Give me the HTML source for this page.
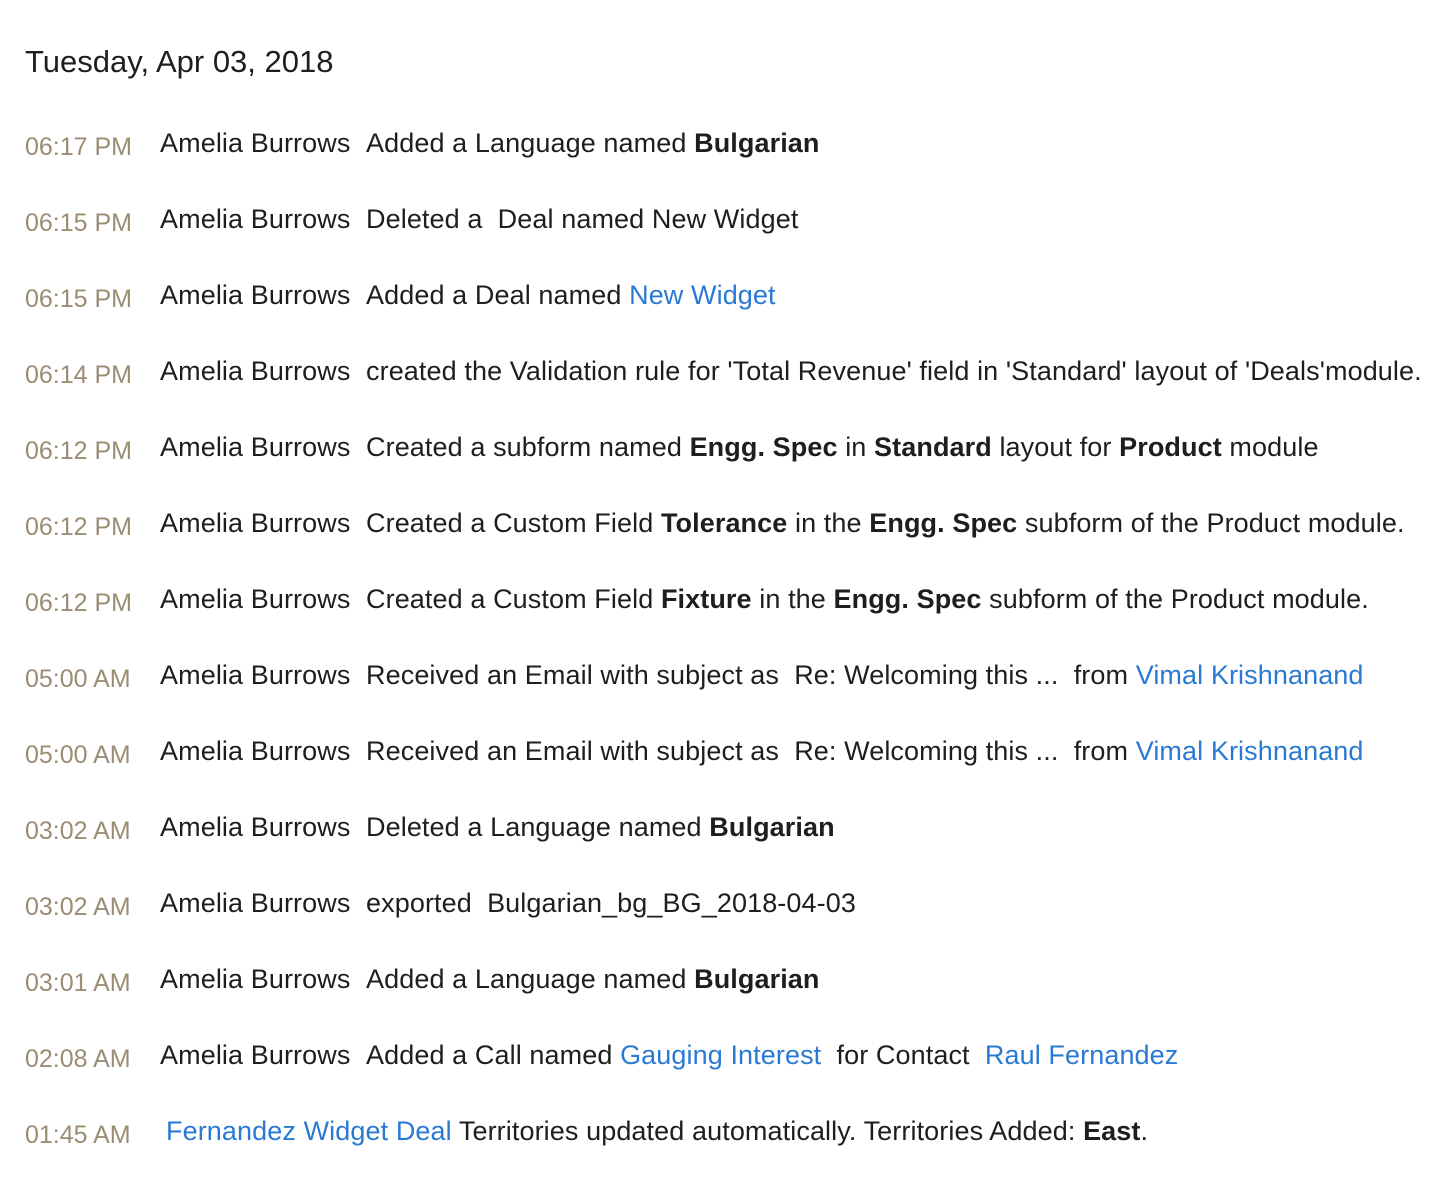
<!DOCTYPE html>
<html><head><meta charset="utf-8"><style>
body{margin:0;width:1440px;height:1200px;background:#fff;font-family:"Liberation Sans",Arial,sans-serif;color:#1e1e1e;position:relative;overflow:hidden}
.d{position:absolute;left:25px;top:44px;font-size:31px;line-height:36px}
.t{position:absolute;left:25px;font-size:25px;line-height:30px;color:#9b8c74;white-space:nowrap}
.n{position:absolute;left:160px;font-size:27px;line-height:30px;white-space:nowrap;letter-spacing:0.1px}
.m{position:absolute;left:366px;font-size:27px;line-height:30px;white-space:nowrap;letter-spacing:0.1px}
.b{color:#2a7ad3}
b{font-weight:bold}
</style></head><body>
<div class="d">Tuesday, Apr 03, 2018</div>

<div class="t" style="top:132px">06:17 PM</div><div class="n" style="top:128px">Amelia Burrows</div><div class="m" style="top:128px">Added a Language named <b>Bulgarian</b></div>
<div class="t" style="top:208px">06:15 PM</div><div class="n" style="top:204px">Amelia Burrows</div><div class="m" style="top:204px">Deleted a &nbsp;Deal named New Widget</div>
<div class="t" style="top:284px">06:15 PM</div><div class="n" style="top:280px">Amelia Burrows</div><div class="m" style="top:280px">Added a Deal named <span class="b">New Widget</span></div>
<div class="t" style="top:360px">06:14 PM</div><div class="n" style="top:356px">Amelia Burrows</div><div class="m" style="top:356px">created the Validation rule for 'Total Revenue' field in 'Standard' layout of 'Deals'module.</div>
<div class="t" style="top:436px">06:12 PM</div><div class="n" style="top:432px">Amelia Burrows</div><div class="m" style="top:432px">Created a subform named <b>Engg. Spec</b> in <b>Standard</b> layout for <b>Product</b> module</div>
<div class="t" style="top:512px">06:12 PM</div><div class="n" style="top:508px">Amelia Burrows</div><div class="m" style="top:508px">Created a Custom Field <b>Tolerance</b> in the <b>Engg. Spec</b> subform of the Product module.</div>
<div class="t" style="top:588px">06:12 PM</div><div class="n" style="top:584px">Amelia Burrows</div><div class="m" style="top:584px">Created a Custom Field <b>Fixture</b> in the <b>Engg. Spec</b> subform of the Product module.</div>
<div class="t" style="top:664px">05:00 AM</div><div class="n" style="top:660px">Amelia Burrows</div><div class="m" style="top:660px">Received an Email with subject as &nbsp;Re: Welcoming this ... &nbsp;from <span class="b">Vimal Krishnanand</span></div>
<div class="t" style="top:740px">05:00 AM</div><div class="n" style="top:736px">Amelia Burrows</div><div class="m" style="top:736px">Received an Email with subject as &nbsp;Re: Welcoming this ... &nbsp;from <span class="b">Vimal Krishnanand</span></div>
<div class="t" style="top:816px">03:02 AM</div><div class="n" style="top:812px">Amelia Burrows</div><div class="m" style="top:812px">Deleted a Language named <b>Bulgarian</b></div>
<div class="t" style="top:892px">03:02 AM</div><div class="n" style="top:888px">Amelia Burrows</div><div class="m" style="top:888px">exported &nbsp;Bulgarian_bg_BG_2018-04-03</div>
<div class="t" style="top:968px">03:01 AM</div><div class="n" style="top:964px">Amelia Burrows</div><div class="m" style="top:964px">Added a Language named <b>Bulgarian</b></div>
<div class="t" style="top:1044px">02:08 AM</div><div class="n" style="top:1040px">Amelia Burrows</div><div class="m" style="top:1040px">Added a Call named <span class="b">Gauging Interest</span> &nbsp;for Contact &nbsp;<span class="b">Raul Fernandez</span></div>
<div class="t" style="top:1120px">01:45 AM</div><div class="n" style="top:1116px;left:166px"><span class="b">Fernandez Widget Deal</span> Territories updated automatically. Territories Added: <b>East</b>.</div>
</body></html>
